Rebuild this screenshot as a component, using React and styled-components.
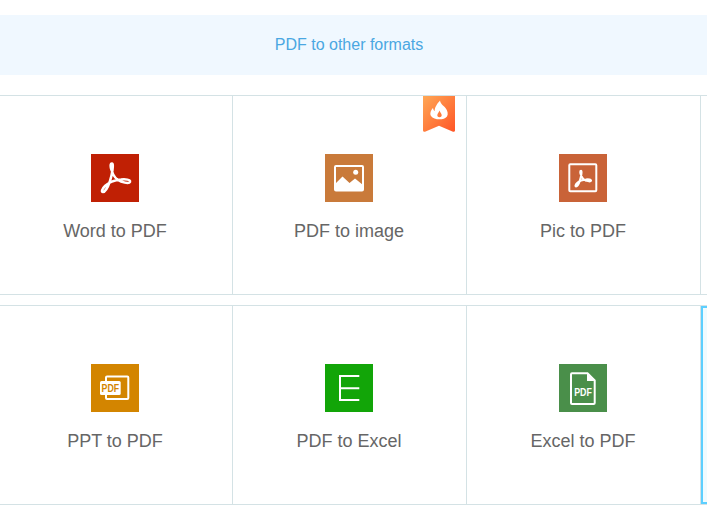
import React from "react";
import styled, { createGlobalStyle } from "styled-components";

const Global = createGlobalStyle`
  html, body { margin: 0; padding: 0; background: #fff; overflow: hidden; }
  body { font-family: "Liberation Sans", Arial, sans-serif; }
`;
const Page = styled.div`
  width: 707px; height: 511px; overflow: hidden; padding-top: 15px; box-sizing: border-box;
`;
const Banner = styled.div`
  height: 60px; background: #f0f8ff; color: #4aa7e2; font-size: 16px;
  display: flex; align-items: center; justify-content: center;
  margin-bottom: 20px; padding-right: 9px;
`;
const Row = styled.div`
  display: flex; height: 200px; box-sizing: border-box; margin-bottom: 10px;
  border-top: 1px solid #d4e2e5; border-bottom: 1px solid #d4e2e5;
`;
const Cell = styled.div`
  position: relative; flex: 0 0 234px; box-sizing: border-box;
  border-right: 1px solid #d4e2e5;
  display: flex; flex-direction: column; align-items: center;
  padding: 58px 1px 0 0; margin-left: ${p => (p.$first ? "-1px" : "0")};
`;
const Selected = styled.div`
  flex: 1; background: #f0fbff;
  border: 2px solid #5ccfff; border-right: 0;
`;
const Tile = styled.div`
  width: 48px; height: 48px; background: ${p => p.$bg};
  display: flex; align-items: center; justify-content: center;
`;
const Label = styled.div`
  margin-top: 18px; font-size: 18px; line-height: 22px; color: #666;
`;
const Ribbon = styled.svg`
  position: absolute; top: 0; right: 10px; width: 33px; height: 37px;
`;

const ACROBAT = "M21 9.500C19 9.500 19.500 13 20.500 16C22 21 25 26 30 27.500C33 28.500 38 30 39 28C40 25.500 34 25 30 25.500C24 26 18 28 14 32C11 35 10 38 12 38C14 38 17 33 19 27C21 21 23 9.500 21 9.500z";

const Acrobat = () => (
  <svg width="48" height="48" viewBox="0 0 48 48" fill="none">
    <path d={ACROBAT} stroke="#fff" strokeWidth="2.500" strokeLinejoin="round" />
  </svg>
);

const ImageIcon = () => (
  <svg width="48" height="48" viewBox="0 0 48 48">
    <rect x="10" y="12" width="28" height="24.500" rx="1" fill="none" stroke="#fff" strokeWidth="2" />
    <circle cx="30.700" cy="18.300" r="2.500" fill="#fff" />
    <path d="M10 30L17.500 22.500L24.500 29L30 24.500L38 31V36.500H10z" fill="#fff" />
  </svg>
);

const PicIcon = () => (
  <svg width="48" height="48" viewBox="0 0 48 48">
    <rect x="10.300" y="10.300" width="27" height="27" rx="1" fill="none" stroke="#fff" strokeWidth="2" />
    <g transform="translate(10.500 11.500) scale(.55)">
      <path d={ACROBAT} fill="none" stroke="#fff" strokeWidth="3.800" strokeLinejoin="round" />
    </g>
  </svg>
);

const PptIcon = () => (
  <svg width="48" height="48" viewBox="0 0 48 48">
    <path d="M15 18v-4.500a1 1 0 0 1 1-1h20.300a1 1 0 0 1 1 1V34a1 1 0 0 1-1 1H16a1 1 0 0 1-1-1v-4" fill="none" stroke="#fff" strokeWidth="2" />
    <rect x="9" y="17" width="20.700" height="14" rx="1.500" fill="#fff" />
    <text x="19.300" y="27.500" textAnchor="middle" textLength="17.500" lengthAdjust="spacingAndGlyphs" fontFamily="Liberation Sans" fontWeight="700" fontSize="10" fill="#d38500">PDF</text>
  </svg>
);

const ExcelIcon = () => (
  <svg width="48" height="48" viewBox="0 0 48 48">
    <path d="M34.300 12H15V36H34.300M15 24.300H34.300" fill="none" stroke="#fff" strokeWidth="2" />
  </svg>
);

const DocIcon = () => (
  <svg width="48" height="48" viewBox="0 0 48 48">
    <path d="M12 10.300a1 1 0 0 1 1-1h15.500L35.700 16.500V39a1 1 0 0 1-1 1H13a1 1 0 0 1-1-1z" fill="none" stroke="#fff" strokeWidth="2" />
    <path d="M28 9.500V17h7.500z" fill="#fff" />
    <text x="24" y="31.700" textAnchor="middle" textLength="17.700" lengthAdjust="spacingAndGlyphs" fontFamily="Liberation Sans" fontWeight="700" fontSize="10" fill="#fff">PDF</text>
  </svg>
);

const Hot = () => (
  <Ribbon viewBox="0 0 33 37">
    <defs>
      <linearGradient id="hot" x1="0" y1="0" x2="1" y2="1">
        <stop offset="0" stopColor="#ffa755" />
        <stop offset="1" stopColor="#ff5526" />
      </linearGradient>
    </defs>
    <path d="M0 0h32v34.500a1.500 1.500 0 0 1-2 1.200L16 29.700 2 35.700a1.500 1.500 0 0 1-2-1.200z" fill="url(#hot)" />
    <path
      fillRule="evenodd"
      d="M17 4.500C17.500 8 20.500 9.500 22.500 12C24.500 14.500 25.500 18 24 20.500C22.500 22.500 19.500 23.300 16.500 23.300C13 23.300 9.500 22.500 8 20C6.500 17.500 8 14 10 12C10.200 13.500 10.800 14.500 11.800 15C11.500 11 14.500 7.500 17 4.500zM16.500 14.500C16 16.500 14.300 17.500 14.300 19.300C14.300 20.500 15.300 21.300 16.500 21.300C17.700 21.300 18.700 20.500 18.700 19.300C18.700 17.500 17 16.500 16.500 14.500z"
      fill="#fff"
    />
  </Ribbon>
);

const rows = [
  [
    { label: "Word to PDF", bg: "#c02004", icon: <Acrobat /> },
    { label: "PDF to image", bg: "#c97a3a", icon: <ImageIcon />, hot: true },
    { label: "Pic to PDF", bg: "#c96338", icon: <PicIcon /> },
  ],
  [
    { label: "PPT to PDF", bg: "#d38500", icon: <PptIcon /> },
    { label: "PDF to Excel", bg: "#12a508", icon: <ExcelIcon /> },
    { label: "Excel to PDF", bg: "#4a8f4a", icon: <DocIcon /> },
  ],
];

export default function App() {
  return (
    <Page>
      <Global />
      <Banner>PDF to other formats</Banner>
      {rows.map((cells, r) => (
        <Row key={r}>
          {cells.map((c, i) => (
            <Cell key={c.label} $first={i === 0}>
              {c.hot && <Hot />}
              <Tile $bg={c.bg}>{c.icon}</Tile>
              <Label>{c.label}</Label>
            </Cell>
          ))}
          {r === 1 && <Selected />}
        </Row>
      ))}
    </Page>
  );
}
